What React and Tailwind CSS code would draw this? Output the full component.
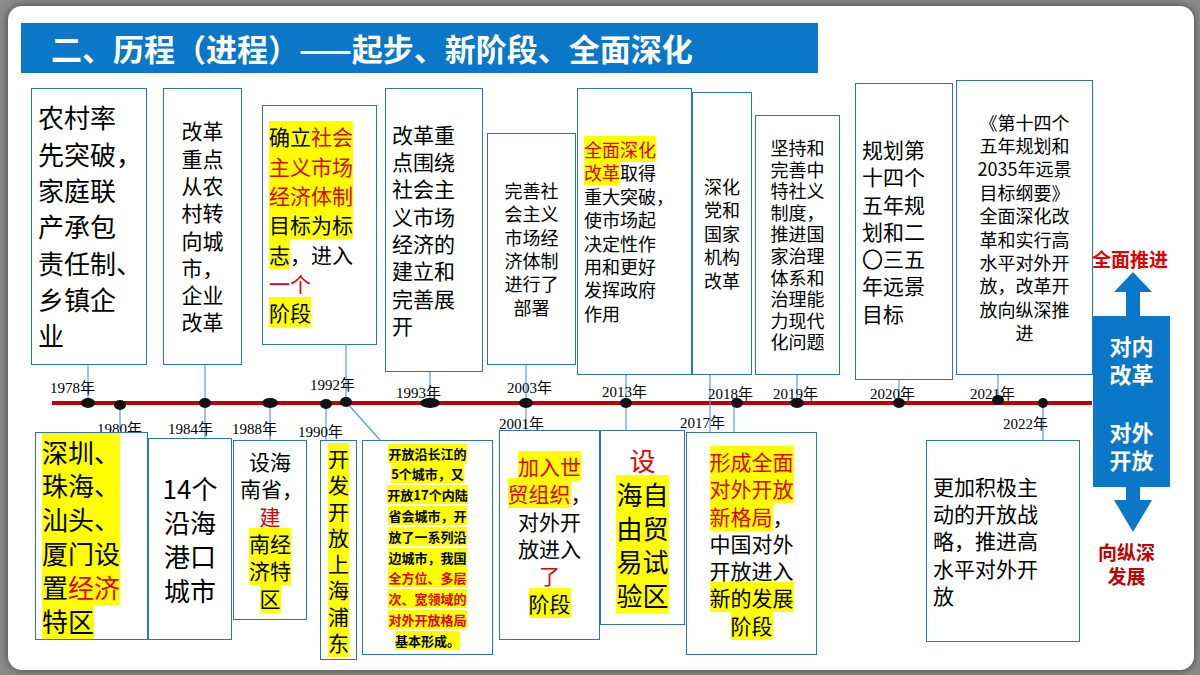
const F = { fontFamily: '"Noto Sans CJK SC", "Liberation Serif", serif' };

function Seg({ s }) {
  if (typeof s === "string") return s;
  const [t, k] = s;
  const c = k === "y" ? "bg-[#ffff00]" : k === "r" ? "bg-[#ffff00] text-[#e00000]" : "text-[#e00000]";
  return <span className={c}>{t}</span>;
}

function Box({ x, y, w, h, lines, fs = 22, lh = 1.3, align = "text-center", bold = "" }) {
  return (
    <div
      className={`absolute border border-[#2e75b6] bg-white flex flex-col justify-center text-black ${align} ${bold}`}
      style={{ left: x, top: y, width: w, height: h, fontSize: fs, lineHeight: lh }}
    >
      {lines.map((ln, i) => (
        <div key={i} className="whitespace-nowrap px-[6px]">
          {(Array.isArray(ln) && typeof ln[0] !== "string") || (Array.isArray(ln) && ln.length > 2) || (Array.isArray(ln) && Array.isArray(ln[0]))
            ? ln.map((s, j) => <Seg key={j} s={s} />)
            : <Seg s={ln} />}
        </div>
      ))}
    </div>
  );
}

const years = [
  ["1978年", 50, 377], ["1980年", 97, 418], ["1984年", 168, 418], ["1988年", 232, 418],
  ["1990年", 298, 421], ["1992年", 310, 374], ["1993年", 396, 382], ["2003年", 507, 377],
  ["2001年", 499, 413], ["2013年", 602, 381], ["2017年", 680, 412], ["2018年", 708, 383],
  ["2019年", 773, 383], ["2020年", 870, 383], ["2021年", 970, 383], ["2022年", 1003, 413],
];
const dots = [[88,403,7],[120,405,6],[205,403,6],[270,403,8],[326,404,6],[346,402,6],[430,403,10],[526,403,7],[626,403,6],[737,403,6],[797,403,7],[899,403,6],[998,400,6],[1043,403,5]];
const lines = [[88,365,88,403],[205,365,205,438],[326,404,326,440],[346,345,346,402],[346,402,380,440],[430,372,430,403],[526,365,526,430],[626,375,626,430],[710,375,710,432],[797,375,797,403],[899,380,899,403],[998,375,998,400],[120,405,120,430],[270,403,270,440],[1043,403,1043,440],[734,403,734,432]];

const Y = (t) => [t, "y"];
const RY = (t) => [t, "r"];

export default function App() {
  return (
    <div className="w-[1200px] h-[675px] bg-[#8a8a8a] relative overflow-hidden" style={F}>
      <div className="absolute left-[8px] top-[6px] w-[1186px] h-[664px] bg-white rounded-[14px] shadow-[0_0_8px_rgba(0,0,0,0.5)]" />
      <div className="absolute left-[21px] top-[23px] w-[797px] h-[50px] bg-[#0a77c8] text-white font-bold text-[31px] leading-[50px] pl-[30px] whitespace-nowrap">
        二、历程（进程）——起步、新阶段、全面深化
      </div>
      <svg className="absolute left-0 top-0" width="1200" height="675">
        <line x1="52" y1="403" x2="1092" y2="403" stroke="#c00000" strokeWidth="4" />
        {lines.map((l, i) => (
          <line key={i} x1={l[0]} y1={l[1]} x2={l[2]} y2={l[3]} stroke="#5b9bd5" strokeWidth="1.2" />
        ))}
        {dots.map((d, i) => (
          <ellipse key={i} cx={d[0]} cy={d[1]} rx={d[2]} ry="5" fill="#111" />
        ))}
        <path d="M1133 272 L1114 292 L1126 292 L1126 500 L1114 500 L1133 532 L1152 500 L1140 500 L1140 292 L1152 292 Z" fill="#0a77c8" />
      </svg>
      {years.map(([t, x, y]) => (
        <div key={t} className="absolute text-[15px] text-black" style={{ left: x, top: y, fontFamily: '"Liberation Serif", "Noto Sans CJK SC", serif' }}>{t}</div>
      ))}

      <Box x={31} y={88} w={116} h={277} fs={26} lh={1.4} align="text-left"
        lines={["农村率", "先突破，", "家庭联", "产承包", "责任制、", "乡镇企", "业"]} />
      <Box x={163} y={88} w={79} h={277} fs={21}
        lines={["改革", "重点", "从农", "村转", "向城", "市，", "企业", "改革"]} />
      <Box x={262} y={105} w={115} h={240} fs={21} lh={1.4} align="text-left"
        lines={[[Y("确立"), RY("社会")], [RY("主义市场")], [RY("经济体制")], [Y("目标为标")], [[ "志", "y" ], "，进入"], ["一个", Y("新的")], [Y("阶段")]]} />
      <Box x={385} y={88} w={98} h={284} fs={21} align="text-left"
        lines={["改革重", "点围绕", "社会主", "义市场", "经济的", "建立和", "完善展", "开"]} />
      <Box x={487} y={133} w={89} h={232} fs={18}
        lines={["完善社", "会主义", "市场经", "济体制", "进行了", "部署"]} />
      <Box x={577} y={88} w={115} h={287} fs={18} align="text-left"
        lines={[[RY("全面深化")], [RY("改革"), "取得"], "重大突破，", "使市场起", "决定性作", "用和更好", "发挥政府", "作用"]} />
      <Box x={692} y={92} w={60} h={283} fs={18}
        lines={["深化", "党和", "国家", "机构", "改革"]} />
      <Box x={755} y={115} w={85} h={260} fs={18} lh={1.2}
        lines={["坚持和", "完善中", "特社义", "制度，", "推进国", "家治理", "体系和", "治理能", "力现代", "化问题"]} />
      <Box x={855} y={83} w={98} h={297} fs={21} align="text-left"
        lines={["规划第", "十四个", "五年规", "划和二", "〇三五", "年远景", "目标"]} />
      <Box x={956} y={80} w={137} h={295} fs={18} lh={1.3}
        lines={["《第十四个", "五年规划和", "2035年远景", "目标纲要》", "全面深化改", "革和实行高", "水平对外开", "放，改革开", "放向纵深推", "进"]} />

      <Box x={35} y={432} w={113} h={208} fs={26} lh={1.3} align="text-left"
        lines={[[Y("深圳、")], [Y("珠海、")], [Y("汕头、")], [Y("厦门设")], [Y("置"), RY("经济")], [Y("特区")]]} />
      <Box x={148} y={438} w={84} h={202} fs={26}
        lines={["14个", "沿海", "港口", "城市"]} />
      <Box x={233} y={440} w={74} h={180} fs={21}
        lines={["设海", "南省，", ["建", Y("海")], [Y("南经")], [Y("济特")], [Y("区")]]} />
      <Box x={320} y={440} w={37} h={220} fs={21} lh={1.25}
        lines={[[Y("开")], [Y("发")], [Y("开")], [Y("放")], [Y("上")], [Y("海")], [Y("浦")], [Y("东")]]} />
      <Box x={362} y={440} w={131} h={215} fs={13} lh={1.6} bold="font-bold"
        lines={[[Y("开放沿长江的")], [Y("5个城市，又")], [Y("开放17个内陆")], [Y("省会城市，开")], [Y("放了一系列沿")], [Y("边城市，我国")], [RY("全方位、多层")], [RY("次、宽领域的")], [RY("对外开放格局")], [Y("基本形成。")]]} />
      <Box x={499} y={430} w={101} h={210} fs={21}
        lines={[[RY("加入世")], [RY("贸组织"), "，"], "对外开", "放进入", ["了", Y("新的")], [Y("阶段")]]} />
      <Box x={600} y={430} w={85} h={195} fs={26}
        lines={[["设", Y("上")], [Y("海自")], [Y("由贸")], [Y("易试")], [Y("验区")]]} />
      <Box x={686} y={432} w={131} h={223} fs={21}
        lines={[[RY("形成全面")], [RY("对外开放")], [RY("新格局"), "，"], "中国对外", "开放进入", [Y("新的发展")], [Y("阶段")]]} />
      <Box x={926} y={440} w={154} h={202} fs={21} align="text-left"
        lines={["更加积极主", "动的开放战", "略，推进高", "水平对外开", "放"]} />

      <div className="absolute left-[1092px] top-[245px] text-[#e00000] font-bold text-[19px]">全面推进</div>
      <div className="absolute left-[1093px] top-[316px] w-[77px] h-[171px] bg-[#0a77c8] text-white font-bold text-[22px] leading-[28px] flex flex-col items-center justify-center gap-[30px]">
        <div className="text-center">对内<br />改革</div>
        <div className="text-center">对外<br />开放</div>
      </div>
      <div className="absolute left-[1098px] top-[540px] text-[#c00000] font-bold text-[19px] leading-[24px] text-center">向纵深<br />发展</div>
    </div>
  );
}
